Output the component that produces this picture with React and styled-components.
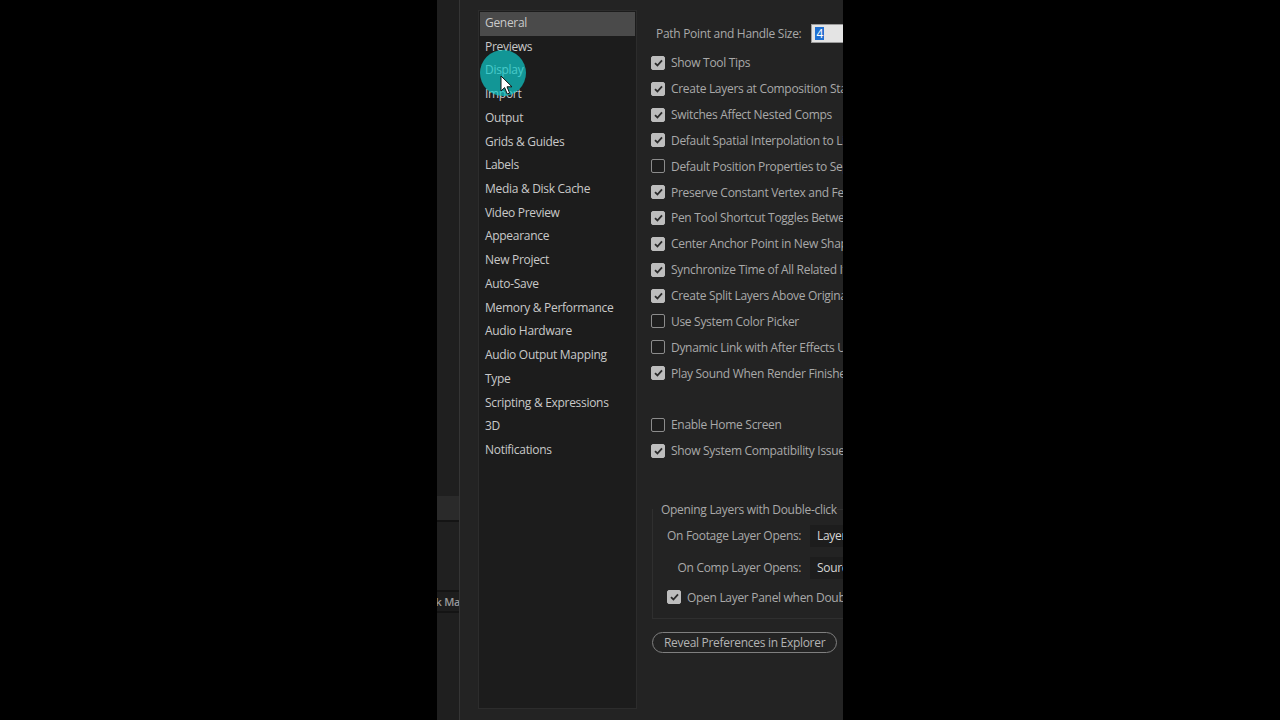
import React from 'react'
import styled, { createGlobalStyle } from 'styled-components'

const GlobalStyle = createGlobalStyle`
    html, body {
        margin: 0;
        padding: 0;
        background: #000;
        height: 100%;
    }
    body {
        font-family: 'Open Sans', 'Noto Sans', sans-serif;
        letter-spacing: -0.3px;
        -webkit-font-smoothing: antialiased;
    }
`;

const Page = styled.div`
    width: 1280px;
    height: 720px;
    display: flex;
    background: #000;
    overflow: hidden;
`;

const Stage = styled.div`
    margin-left: 437px;
    width: 406px;
    height: 720px;
    display: flex;
    overflow: hidden;
`;

const SideStrip = styled.div`
    width: 23px;
    flex-shrink: 0;
    background: #1f1f1f;
    border-right: 1px solid #353535;
    display: flex;
    flex-direction: column;
    padding-top: 496px;
    box-sizing: border-box;
`;

const StripBand = styled.div`
    height: ${p => p.h}px;
    background: ${p => p.bg};
    border-bottom: ${p => p.line ? '2px solid #141414' : 'none'};
    color: #9a9a9a;
    font-size: 11px;
    font-weight: 600;
    line-height: ${p => p.h}px;
    white-space: nowrap;
    overflow: hidden;
    text-indent: -23px;
`;

const Dialog = styled.div`
    flex: 1;
    min-width: 0;
    background: #232323;
    display: flex;
    gap: 7px;
    padding: 10px 0 11px 18px;
    box-sizing: border-box;
`;

const CategoryList = styled.ul`
    position: relative;
    width: 159px;
    flex-shrink: 0;
    margin: 0;
    padding: 1px 1px;
    box-sizing: border-box;
    list-style: none;
    background: #1c1c1c;
    border: 1px solid #2c2c2c;
`;

const Category = styled.li`
    height: 23.72px;
    line-height: 22px;
    padding-left: 5px;
    font-size: 12px;
    color: #c9c9c9;
    background: ${p => p.selected ? '#4a4a4a' : 'transparent'};
    white-space: nowrap;
`;

const ClickRing = styled.div`
    position: absolute;
    left: 1px;
    top: 39px;
    width: 46px;
    height: 46px;
    border-radius: 50%;
    background: rgba(14, 202, 202, 0.7);
    pointer-events: none;
`;

const Cursor = styled.svg`
    position: absolute;
    left: 21px;
    top: 64px;
`;

const Settings = styled.div`
    flex: 1;
    min-width: 0;
    overflow: hidden;
    display: flex;
    flex-direction: column;
    padding: 13px 0 0 7px;
    white-space: nowrap;
`;

const SizeRow = styled.div`
    display: flex;
    align-items: center;
    height: 20px;
    margin-bottom: 7px;
    padding-left: 5px;
    font-size: 12px;
    color: #a9a9a9;
`;

const NumberInput = styled.div`
    margin-left: 10px;
    width: 40px;
    height: 19px;
    flex-shrink: 0;
    box-sizing: border-box;
    background: #e4e4e4;
    border: 1px solid #9a9a9a;
    padding: 2px 3px;
    display: flex;
`;

const Selected = styled.span`
    background: #1f6fd1;
    color: #fff;
    font-size: 12px;
    line-height: 13px;
    padding: 0 1px;
`;

const CheckRow = styled.label`
    display: flex;
    align-items: center;
    gap: 6px;
    height: 25.85px;
    font-size: 12px;
    color: #a9a9a9;
    margin-top: ${p => p.gapTop || 0}px;
`;

const Box = styled.span`
    width: 14px;
    height: 14px;
    flex-shrink: 0;
    border-radius: 2px;
    box-sizing: border-box;
    background: ${p => p.on ? '#bdbdbd' : '#1e1e1e'};
    border: 1.5px solid ${p => p.on ? '#bdbdbd' : '#8c8c8c'};
    display: flex;
    align-items: center;
    justify-content: center;
`;

const Group = styled.fieldset`
    margin: 37px 0 0 1px;
    padding: 7px 0 8px 14px;
    border: 1px solid #2f2f2f;
    border-right: none;
    min-width: 0;
`;

const Legend = styled.legend`
    padding: 0 0 0 8px;
    margin-left: -14px;
    font-size: 12px;
    color: #a9a9a9;
`;

const SelectRow = styled.div`
    display: flex;
    align-items: center;
    height: 22px;
    margin-top: ${p => p.gapTop || 0}px;
    font-size: 12px;
    color: #a9a9a9;
`;

const SelectLabel = styled.span`
    width: 134px;
    flex-shrink: 0;
    text-align: right;
`;

const Dropdown = styled.div`
    margin-left: 9px;
    height: 22px;
    line-height: 22px;
    padding: 0 7px;
    background: #1d1d1d;
    color: #d6d6d6;
    width: 120px;
    flex-shrink: 0;
`;

const GroupCheck = styled.div`
    margin-top: 6px;
`;

const RevealButton = styled.button`
    align-self: flex-start;
    margin: 13px 0 0 1px;
    height: 21px;
    padding: 0 11px;
    border: 1.5px solid #7f7f7f;
    border-radius: 11px;
    background: transparent;
    color: #b3b3b3;
    font-family: inherit;
    letter-spacing: inherit;
    font-size: 12px;
    line-height: 17px;
`;

const categories = [
    'General', 'Previews', 'Display', 'Import', 'Output', 'Grids & Guides', 'Labels',
    'Media & Disk Cache', 'Video Preview', 'Appearance', 'New Project', 'Auto-Save',
    'Memory & Performance', 'Audio Hardware', 'Audio Output Mapping', 'Type',
    'Scripting & Expressions', '3D', 'Notifications',
];

const options = [
    ['Show Tool Tips', true],
    ['Create Layers at Composition Start Time', true],
    ['Switches Affect Nested Comps', true],
    ['Default Spatial Interpolation to Linear', true],
    ['Default Position Properties to Separate Dimensions', false],
    ['Preserve Constant Vertex and Feather Point Count', true],
    ['Pen Tool Shortcut Toggles Between Pen and Mask Feather Tools', true],
    ['Center Anchor Point in New Shape Layers', true],
    ['Synchronize Time of All Related Items', true],
    ['Create Split Layers Above Original Layer', true],
    ['Use System Color Picker', false],
    ['Dynamic Link with After Effects Uses Project File Name with Number', false],
    ['Play Sound When Render Finishes', true],
];

const Check = ({ on }) => (
    <Box on={on}>
        {on && (
            <svg width="9" height="8" viewBox="0 0 9 8">
                <path d="M1 4.2 L3.4 6.5 L8 1.3" fill="none" stroke="#2b2b2b" strokeWidth="1.8" />
            </svg>
        )}
    </Box>
);

const App = () => {
    return (
        <Page>
            <GlobalStyle />
            <Stage>
                <SideStrip>
                    <StripBand h={24} bg="#2a2a2a" line />
                    <StripBand h={68} bg="#202020" line />
                    <StripBand h={19} bg="#1d1d1d" line>Track Matte</StripBand>
                </SideStrip>
                <Dialog>
                    <CategoryList>
                        {categories.map((c, i) => (
                            <Category key={c} selected={i === 0}>{c}</Category>
                        ))}
                        <ClickRing />
                        <Cursor width="14" height="21" viewBox="0 0 14 21">
                            <path d="M1 1 L1 16 L4.6 12.6 L7.3 19 L9.6 18 L7 11.8 L12 11.8 Z" fill="#fff" stroke="#111" strokeWidth="1" />
                        </Cursor>
                    </CategoryList>
                    <Settings>
                        <SizeRow>
                            Path Point and Handle Size:
                            <NumberInput><Selected>4</Selected></NumberInput>
                        </SizeRow>
                        {options.map(([label, on]) => (
                            <CheckRow key={label}><Check on={on} />{label}</CheckRow>
                        ))}
                        <CheckRow gapTop={25.85}><Check on={false} />Enable Home Screen</CheckRow>
                        <CheckRow><Check on />Show System Compatibility Issues</CheckRow>
                        <Group>
                            <Legend>Opening Layers with Double-click</Legend>
                            <SelectRow>
                                <SelectLabel>On Footage Layer Opens:</SelectLabel>
                                <Dropdown>Layer Panel</Dropdown>
                            </SelectRow>
                            <SelectRow gapTop={10}>
                                <SelectLabel>On Comp Layer Opens:</SelectLabel>
                                <Dropdown>Source Comp</Dropdown>
                            </SelectRow>
                            <GroupCheck>
                                <CheckRow>
                                    <Check on />Open Layer Panel when Double-clicking with Alt
                                </CheckRow>
                            </GroupCheck>
                        </Group>
                        <RevealButton>Reveal Preferences in Explorer</RevealButton>
                    </Settings>
                </Dialog>
            </Stage>
        </Page>
    )
}

export default App
